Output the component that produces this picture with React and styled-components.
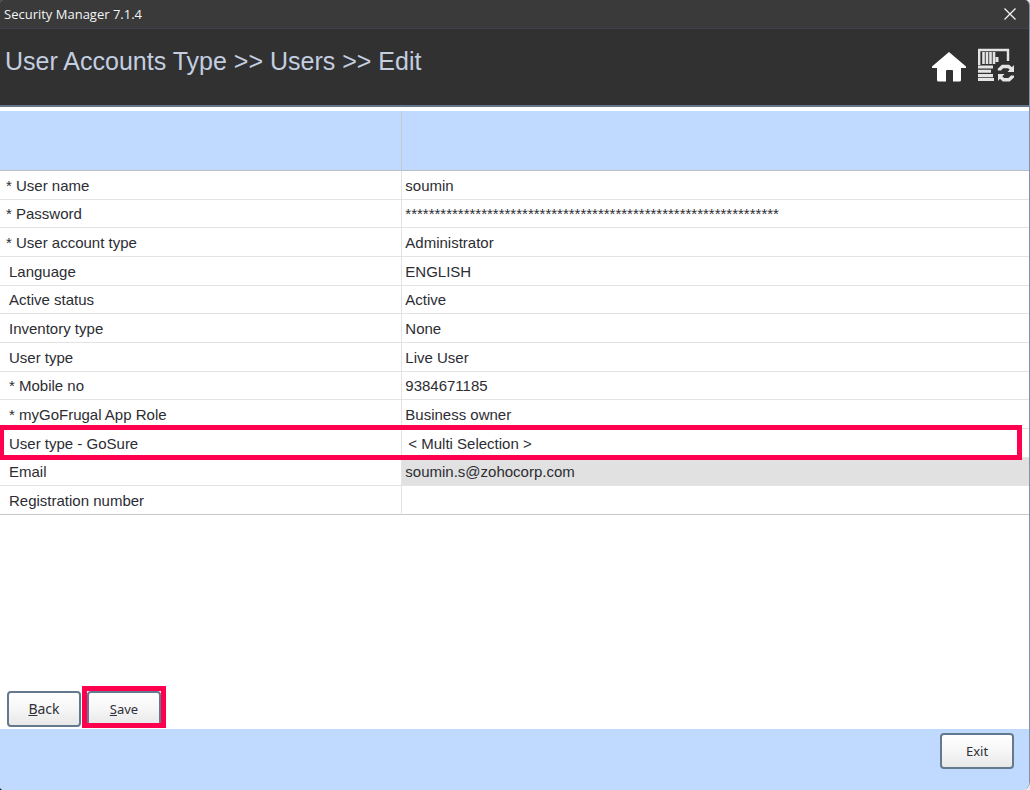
import React from "react";
import styled, { createGlobalStyle, css } from "styled-components";

const GlobalStyle = createGlobalStyle`
  * { box-sizing: border-box; }
  html { background: linear-gradient(to right, #26282c 50%, #e8eaee 50%); }
  body { margin: 0; }
`;

const sans = `"Liberation Sans", Arial, sans-serif`;
const ui = `"Noto Sans", "Open Sans", sans-serif`;

const Window = styled.div`
  min-height: 100vh;
  display: flex;
  flex-direction: column;
  background: #ffffff;
  border-right: 1px solid #8292a8;
  border-radius: 3px 5px 8px 4px;
  overflow: hidden;
  font-family: ${sans};
  color: #2c2d33;
`;

const TitleBar = styled.div`
  display: flex;
  align-items: center;
  justify-content: space-between;
  height: 29px;
  padding: 0 13px 1px 4px;
  background: #3a3a3a;
  border-bottom: 1px solid #3f434d;
  color: #f4f4f4;
  font: 13px/20px "Open Sans", ${ui};
`;

const IconButton = styled.button`
  display: flex;
  padding: 0;
  border: 0;
  background: none;
  color: inherit;
  cursor: pointer;
`;

const Header = styled.header`
  display: flex;
  align-items: flex-start;
  justify-content: space-between;
  height: 78px;
  padding: 16px 15px 0 5px;
  background: #313131;
  border-bottom: 2px solid #66748c;
  color: #ffffff;
`;

const Heading = styled.h1`
  margin: 0;
  color: #c3cee0;
  font: 400 25px/32px ${sans};
`;

const Tools = styled.div`
  display: flex;
  gap: 12px;
  padding-top: 2px;
`;

const Grid = styled.table`
  width: 100%;
  height: 404px;
  margin-top: 4px;
  border-collapse: separate;
  border-spacing: 0;
  table-layout: fixed;
  font-size: 15px;
  line-height: 18px;
`;

const LabelColumn = styled.col`
  width: 39%;
`;

const HeadCell = styled.th`
  height: 60px;
  padding: 0;
  background: #bfd9ff;
  border-bottom: 1px solid #b9bec6;
  & + & { border-left: 1px solid #c3cad4; }
`;

const Row = styled.tr`
  position: relative;
  &:last-child > * { border-bottom-color: #c8c8c8; }
`;

const Label = styled.th`
  padding: 2px 0 0 ${(p) => (p.$outdent ? 6 : 9)}px;
  border-bottom: 1px solid #e3e3e3;
  font-weight: 400;
  text-align: left;
  ${(p) => p.$marked && css`
    &::after {
      content: "";
      position: absolute;
      z-index: 1;
      inset: -4px 7px -2px -1px;
      border: 5px solid #ff004f;
      pointer-events: none;
    }
  `}
`;

const Value = styled.td`
  padding: 2px 0 0 ${(p) => (p.$inset ? 6 : 3)}px;
  border-bottom: 1px solid #e3e3e3;
  border-left: 1px solid #e3e3e3;
  background: ${(p) => (p.$active ? "#e1e1e1" : "transparent")};
`;

const Actions = styled.div`
  display: flex;
  gap: 6px;
  margin-top: auto;
  padding: 16px 7px 2px;
`;

const Button = styled.button`
  width: 74px;
  height: 36px;
  padding: 0 0 1px;
  border: 2px solid #64788e;
  border-radius: 4px;
  background: linear-gradient(#ffffff, #f6f6f6 50%, #e8e8e8);
  color: #303038;
  font: ${(p) => (p.$small ? 13 : 14)}px/20px ${ui};
  cursor: pointer;
`;

const Marked = styled.div`
  position: relative;
  &::after {
    content: "";
    position: absolute;
    inset: -5px -5px -1px;
    border: 5px solid #ff004f;
    pointer-events: none;
  }
`;

const Footer = styled.footer`
  display: flex;
  justify-content: flex-end;
  align-items: flex-start;
  height: 61px;
  padding: 4px 15px 0;
  background: #bfd9ff;
`;

const rows = [
  { label: "* User name", value: "soumin", outdent: true },
  { label: "* Password", value: "*".repeat(64), outdent: true },
  { label: "* User account type", value: "Administrator", outdent: true },
  { label: "Language", value: "ENGLISH" },
  { label: "Active status", value: "Active" },
  { label: "Inventory type", value: "None" },
  { label: "User type", value: "Live User" },
  { label: "* Mobile no", value: "9384671185" },
  { label: "* myGoFrugal App Role", value: "Business owner" },
  { label: "User type - GoSure", value: "< Multi Selection >", marked: true },
  { label: "Email", value: "soumin.s@zohocorp.com", active: true },
  { label: "Registration number", value: "" },
];

const CloseIcon = () => (
  <svg width="12" height="12" viewBox="0 0 12 12" fill="none" stroke="currentColor" strokeWidth="1.3">
    <path d="M0.5 0.5 11.5 11.5M11.5 0.5 0.5 11.5" />
  </svg>
);

const HomeIcon = () => (
  <svg width="34" height="36" viewBox="0 0 34 36" fill="#fff">
    <path d="M17 5 34 19.5V21H29V33Q29 34.5 27.5 34.5H21V24Q21 23 20 23H15Q14 23 14 24V34.5H6.5Q5 34.5 5 33V21H0V19.5Z" />
  </svg>
);

const RegisterSyncIcon = () => (
  <svg width="36" height="36" viewBox="0 0 36 36" fill="none" stroke="#e4e4e4">
    <path d="M1.2 18V3H30V14" strokeWidth="2.4" />
    <path d="M5.5 5V17M9 5V17M12.5 5V17M16 5V17" strokeWidth="2.6" />
    <path d="M19 10V15" strokeWidth="3" />
    <path d="M0 20H15M0 24.3H13M0 28.6H15M0 32.5H16" strokeWidth="3.1" />
    <path d="M21.5 23.5V22.5L24.5 19.5H30.5L33.5 22M34.5 28.5V29.5L31 32.7H25.5L22.5 30" strokeWidth="3.4" />
    <path d="M36 18V25H29.5ZM20 34V27H26.5Z" fill="#e4e4e4" stroke="none" />
  </svg>
);

export default function App() {
  return (
    <>
      <GlobalStyle />
      <Window>
        <TitleBar>
          <span>Security Manager 7.1.4</span>
          <IconButton aria-label="Close"><CloseIcon /></IconButton>
        </TitleBar>
        <Header>
          <Heading>User Accounts Type &gt;&gt; Users &gt;&gt; Edit</Heading>
          <Tools>
            <IconButton aria-label="Home"><HomeIcon /></IconButton>
            <IconButton aria-label="Refresh register"><RegisterSyncIcon /></IconButton>
          </Tools>
        </Header>
        <Grid>
          <colgroup><LabelColumn /><col /></colgroup>
          <thead><tr><HeadCell /><HeadCell /></tr></thead>
          <tbody>
            {rows.map((r) => (
              <Row key={r.label}>
                <Label scope="row" $outdent={r.outdent} $marked={r.marked}>{r.label}</Label>
                <Value $active={r.active} $inset={r.marked}>{r.value}</Value>
              </Row>
            ))}
          </tbody>
        </Grid>
        <Actions>
          <Button><u>B</u>ack</Button>
          <Marked><Button $small><u>S</u>ave</Button></Marked>
        </Actions>
        <Footer><Button $small>Exit</Button></Footer>
      </Window>
    </>
  );
}
